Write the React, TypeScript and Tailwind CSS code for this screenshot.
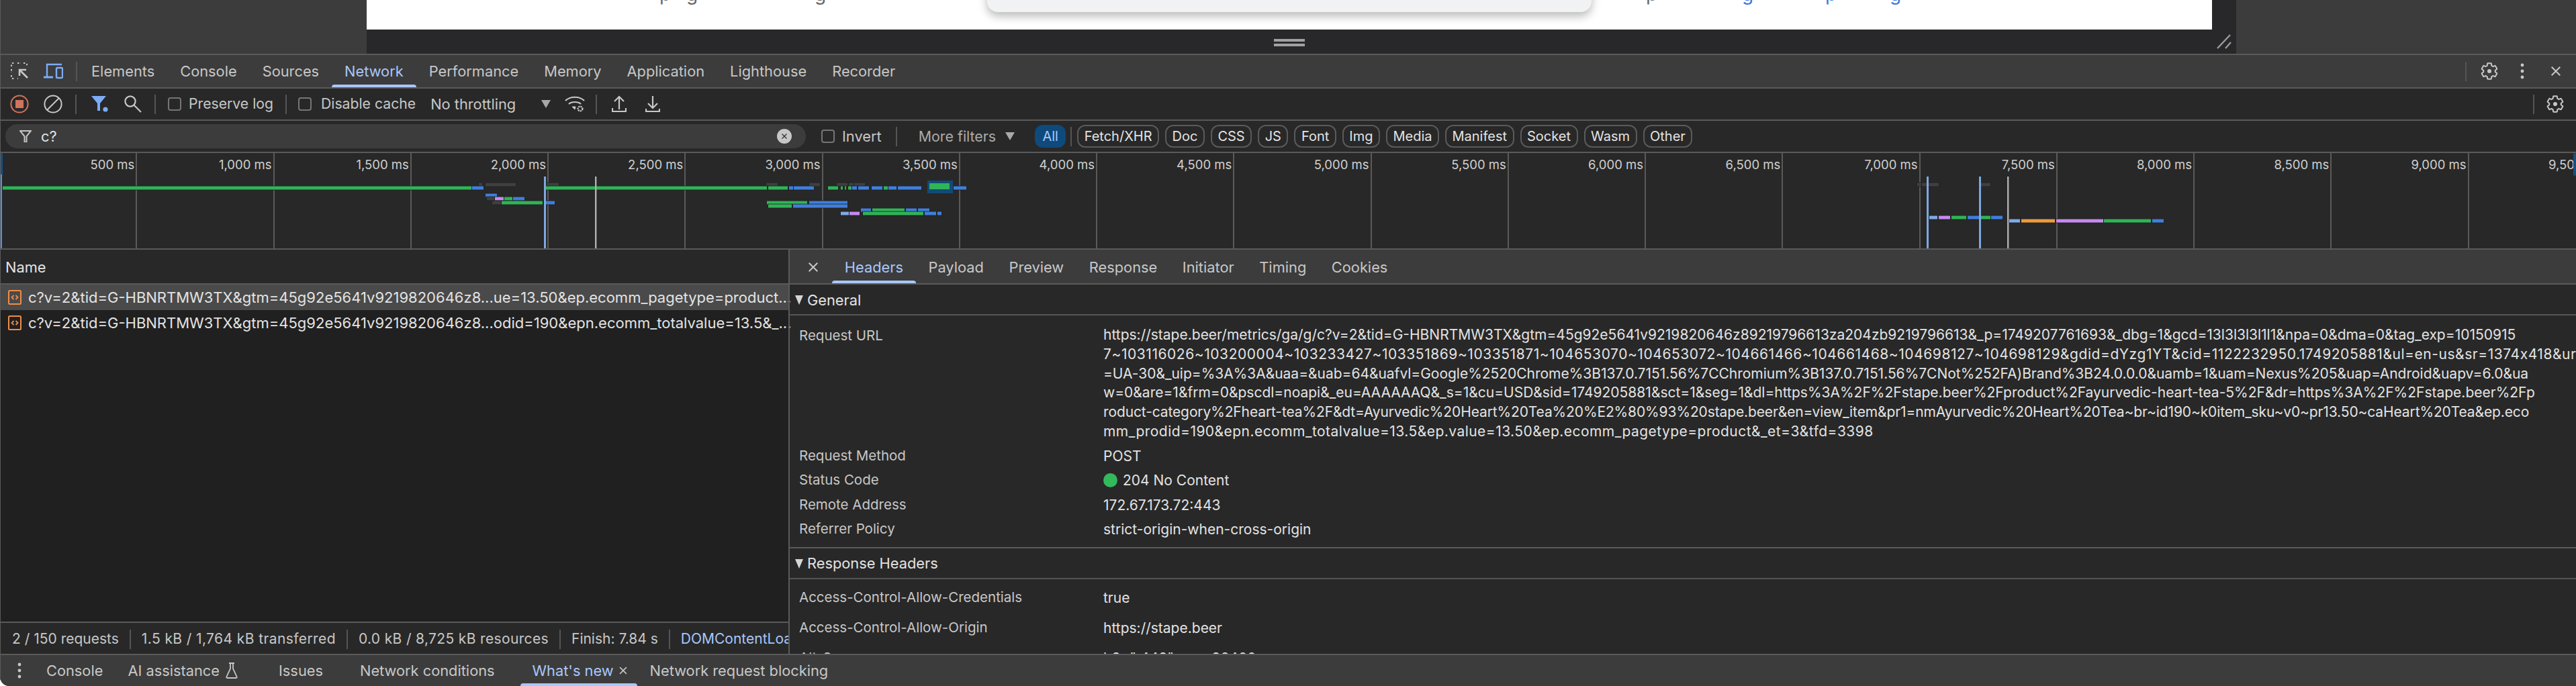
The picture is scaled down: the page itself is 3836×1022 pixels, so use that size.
import React from 'react';

const mainTabs = ['Elements', 'Console', 'Sources', 'Network', 'Performance', 'Memory', 'Application', 'Lighthouse', 'Recorder'];
const detailTabs = ['Headers', 'Payload', 'Preview', 'Response', 'Initiator', 'Timing', 'Cookies'];
const pills = ['Fetch/XHR', 'Doc', 'CSS', 'JS', 'Font', 'Img', 'Media', 'Manifest', 'Socket', 'Wasm', 'Other'];
const ticks = ['500', '1,000', '1,500', '2,000', '2,500', '3,000', '3,500', '4,000', '4,500', '5,000', '5,500', '6,000', '6,500', '7,000', '7,500', '8,000', '8,500', '9,000', '9,500'];

const urlLines = [
  { text: 'https://stape.beer/metrics/ga/g/c?v=2&tid=G-HBNRTMW3TX&gtm=45g92e5641v9219820646z89219796613za204zb9219796613&_p=1749207761693&_dbg=1&gcd=13l3l3l3l1l1&npa=0&dma=0&tag_exp=10150915', cls: '' },
  { text: '7~103116026~103200004~103233427~103351869~103351871~104653070~104653072~104661466~104661468~104698127~104698129&gdid=dYzg1YT&cid=1122232950.1749205881&ul=en-us&sr=1374x418&ur', cls: 'tracking-[0.55px]' },
  { text: '=UA-30&_uip=%3A%3A&uaa=&uab=64&uafvl=Google%2520Chrome%3B137.0.7151.56%7CChromium%3B137.0.7151.56%7CNot%252FA)Brand%3B24.0.0.0&uamb=1&uam=Nexus%205&uap=Android&uapv=6.0&ua', cls: 'tracking-[-0.02px]' },
  { text: 'w=0&are=1&frm=0&pscdl=noapi&_eu=AAAAAAQ&_s=1&cu=USD&sid=1749205881&sct=1&seg=1&dl=https%3A%2F%2Fstape.beer%2Fproduct%2Fayurvedic-heart-tea-5%2F&dr=https%3A%2F%2Fstape.beer%2Fp', cls: '' },
  { text: 'roduct-category%2Fheart-tea%2F&dt=Ayurvedic%20Heart%20Tea%20%E2%80%93%20stape.beer&en=view_item&pr1=nmAyurvedic%20Heart%20Tea~br~id190~k0item_sku~v0~pr13.50~caHeart%20Tea&ep.eco', cls: 'tracking-[-0.12px]' },
  { text: 'mm_prodid=190&epn.ecomm_totalvalue=13.5&ep.value=13.50&ep.ecomm_pagetype=product&_et=3&tfd=3398', cls: 'tracking-[0.46px]' },
];

const G = '#2fb457';
const B = '#3f7fdc';
const P = '#c58af0';
const L = '#7eaae6';
const O = '#ee9b3c';
const D = '#3f3f3f';

// [y, x1, x2, colour] in page pixels
const bars: [number, number, number, string][] = [
  [275, 713, 718, D], [275, 723, 768, D], [275, 814, 832, D], [275, 1141, 1158, D], [275, 1205, 1221, D],
  [275, 1246, 1262, D], [275, 1264, 1271, D], [275, 1272, 1288, D],
  [275, 2855, 2861, D], [275, 2862, 2887, D], [275, 2949, 2964, D],
  [280, 4, 703, G], [280, 703, 720, B], [280, 813, 1142, G], [280, 1144, 1173, G], [280, 1175, 1181, B], [280, 1182, 1212, B],
  [280, 1233, 1248, G], [280, 1252, 1255, G], [280, 1258, 1260, G], [280, 1263, 1268, G], [280, 1269, 1276, B],
  [280, 1278, 1294, B], [280, 1298, 1314, B], [280, 1316, 1322, G], [280, 1323, 1335, B], [280, 1337, 1372, B], [280, 1420, 1439, B],
  [291, 723, 740, B],
  [296, 725, 736, D], [296, 737, 750, P], [296, 751, 763, G], [296, 764, 781, B],
  [302, 733, 746, D], [302, 747, 808, G], [302, 810, 826, B], [302, 1142, 1202, G], [302, 1205, 1262, B],
  [307, 1144, 1179, G], [307, 1181, 1262, B],
  [313, 1282, 1297, B], [313, 1299, 1347, G], [313, 1349, 1365, B], [313, 1367, 1384, B],
  [318, 1252, 1264, L], [318, 1265, 1280, P], [318, 1285, 1375, G], [318, 1377, 1394, B], [318, 1396, 1402, B],
  [324, 2873, 2885, L], [324, 2887, 2904, P], [324, 2906, 2928, G], [324, 2930, 2947, B], [324, 2950, 2964, G], [324, 2965, 2982, B],
  [329, 2992, 3008, L], [329, 3010, 3060, O], [329, 3062, 3132, P], [329, 3133, 3203, G], [329, 3205, 3222, B],
];

const Divider = ({ className = '' }: { className?: string }) => <div className={`w-[2px] h-[29px] bg-[#555555] shrink-0 ${className}`} />;

const Checkbox = ({ className = '' }: { className?: string }) => (
  <div className={`w-[20px] h-[20px] rounded-[4px] border-2 border-[#757575] shrink-0 ${className}`} />
);

const Gear = ({ className = '' }: { className?: string }) => (
  <svg viewBox="0 0 24 24" className={`w-[28px] h-[28px] shrink-0 ${className}`} fill="none" stroke="#c7c7c7" strokeWidth="1.7">
    <path d="M19.43 12.98c.04-.32.07-.64.07-.98s-.03-.66-.07-.98l2.11-1.65c.19-.15.24-.42.12-.64l-2-3.46c-.12-.22-.39-.3-.61-.22l-2.49 1c-.52-.4-1.08-.73-1.69-.98l-.38-2.65C14.46 2.18 14.25 2 14 2h-4c-.25 0-.46.18-.49.42l-.38 2.65c-.61.25-1.17.59-1.69.98l-2.49-1c-.23-.09-.49 0-.61.22l-2 3.46c-.13.22-.07.49.12.64l2.11 1.65c-.04.32-.07.65-.07.98s.03.66.07.98l-2.11 1.65c-.19.15-.24.42-.12.64l2 3.46c.12.22.39.3.61.22l2.49-1c.52.4 1.08.73 1.69.98l.38 2.65c.03.24.24.42.49.42h4c.25 0 .46-.18.49-.42l.38-2.65c.61-.25 1.17-.59 1.69-.98l2.49 1c.23.09.49 0 .61-.22l2-3.46c.12-.22.07-.49-.12-.64l-2.11-1.65z" />
    <circle cx="12" cy="12" r="2.6" fill="#c7c7c7" stroke="none" />
  </svg>
);

const Close = ({ size = 20, className = '', color = '#c7c7c7' }: { size?: number; className?: string; color?: string }) => (
  <svg viewBox="0 0 20 20" width={size} height={size} className={`shrink-0 ${className}`} stroke={color} strokeWidth="2.2" fill="none">
    <path d="M3 3l14 14M17 3L3 17" />
  </svg>
);

const Triangle = ({ className = '' }: { className?: string }) => (
  <svg viewBox="0 0 14 12" className={`w-[14px] h-[12px] shrink-0 ${className}`}>
    <path d="M0 0h14L7 12z" fill="#a8a8a8" />
  </svg>
);

const Disclosure = () => (
  <svg viewBox="0 0 12 14" className="w-[12px] h-[14px] shrink-0">
    <path d="M0 0h12L6 14z" fill="#d5d5d5" />
  </svg>
);

const Dots = ({ className = '' }: { className?: string }) => (
  <svg viewBox="0 0 6 24" className={`w-[6px] h-[24px] shrink-0 ${className}`} fill="#c7c7c7">
    <circle cx="3" cy="3" r="2.4" />
    <circle cx="3" cy="12" r="2.4" />
    <circle cx="3" cy="21" r="2.4" />
  </svg>
);

const FileIcon = () => (
  <svg viewBox="0 0 20 22" className="w-[20px] h-[22px] shrink-0 ml-[12px]" fill="none">
    <rect x="1" y="1" width="18" height="20" rx="1.5" stroke="#ee8d4a" strokeWidth="2" />
    <path d="M8.5 8L5.5 11l3 3M11.5 8l3 3-3 3" stroke="#ee8d4a" strokeWidth="1.8" />
  </svg>
);

const Row = ({ text, selected }: { text: string; selected?: boolean }) => (
  <div className={`h-[38px] flex items-center ${selected ? 'bg-[#4a4a4a]' : ''}`}>
    <FileIcon />
    <span className="ml-[10px] text-[22px] text-[#e3e3e3] whitespace-nowrap">{text}</span>
  </div>
);

const Field = ({ name, className = '', children }: { name: string; className?: string; children: React.ReactNode }) => (
  <div className={`flex items-center pl-[14px] whitespace-nowrap ${className}`}>
    <span className="w-[453px] shrink-0 text-[20.5px] text-[#c7c7c7]">{name}</span>
    <span className="text-[21px] text-[#e3e3e3] flex items-center">{children}</span>
  </div>
);

const SectionTitle = ({ title, className = '' }: { title: string; className?: string }) => (
  <div className={`flex items-center pl-[8px] pt-[2px] border-b-2 border-[#555555] text-[21.8px] text-[#e3e3e3] ${className}`}>
    <Disclosure />
    <span className="ml-[6px]">{title}</span>
  </div>
);

export default function App() {
  return (
    <div className="w-[3836px] h-[1022px] overflow-hidden flex flex-col bg-[#282828] rounded-bl-[14px] font-['Inter',sans-serif] text-[21.8px] text-[#c7c7c7] relative">
      {/* page preview strip */}
      <div className="flex h-[80px] shrink-0">
        <div className="w-[546px] bg-[#3c3c3c]" />
        <div className="w-[2784px] bg-[#28282a] relative">
          <div className="w-[2748px] h-[44px] bg-white relative overflow-hidden">
            <span className="absolute left-[436px] top-[-30px] text-[28px] text-[#666666]">p</span>
            <span className="absolute left-[476px] top-[-30px] text-[28px] text-[#666666]">g</span>
            <span className="absolute left-[667px] top-[-30px] text-[28px] text-[#666666]">g</span>
            <span className="absolute left-[1905px] top-[-30px] text-[28px] text-[#666666]">p</span>
            <span className="absolute left-[2048px] top-[-30px] text-[28px] text-[#3b78e0]">g</span>
            <span className="absolute left-[2172px] top-[-30px] text-[28px] text-[#3b78e0]">p</span>
            <span className="absolute left-[2268px] top-[-30px] text-[28px] text-[#3b78e0]">g</span>
            <div className="absolute left-[924px] top-[-42px] w-[900px] h-[60px] bg-[#f1f2f4] rounded-[16px] shadow-[0_6px_14px_rgba(0,0,0,0.28)]" />
          </div>
          <div className="w-[2748px] h-[36px] flex flex-col items-center pt-[14px] gap-[3px]">
            <div className="w-[46px] h-[4px] bg-[#a0a0a0]" />
            <div className="w-[46px] h-[4px] bg-[#a0a0a0]" />
          </div>
          <svg viewBox="0 0 24 22" className="absolute left-[2754px] top-[51px] w-[24px] h-[22px]" stroke="#9a9a9a" strokeWidth="2.4" fill="none">
            <path d="M2 21L21 1M14 21L22 12" />
          </svg>
        </div>
        <div className="flex-1 bg-[#3c3c3c]" />
      </div>

      {/* main tabs */}
      <div className="h-[50px] shrink-0 flex items-center bg-[#3c3c3c] border-t-2 border-[#5a5a5a]">
        <svg viewBox="0 0 26 26" className="w-[26px] h-[26px] ml-[16px] shrink-0" fill="none" stroke="#c7c7c7" strokeWidth="2">
          <path d="M1 6V3a2 2 0 012-2h3" strokeDasharray="2.4 2.4" />
          <path d="M10 1h5M19 1h3a2 2 0 012 2v3M1 10v5M1 19v3a2 2 0 002 2h3M10 24h1" strokeDasharray="2.4 2.4" />
          <path d="M14 12l11 11" strokeWidth="2.6" />
          <path d="M13 20v-9h10" strokeWidth="2.6" />
        </svg>
        <svg viewBox="0 0 30 24" className="w-[30px] h-[24px] ml-[22px] shrink-0" fill="none" stroke="#7cacf8" strokeWidth="2.4">
          <path d="M28 2H6v19" />
          <path d="M1 21h14" strokeWidth="3" />
          <rect x="20" y="7" width="9" height="15" rx="1.5" />
        </svg>
        <Divider className="ml-[19px]" />
        <div className="flex h-full ml-[2px]">
          {mainTabs.map(t => (
            <div key={t} className={`px-[19px] h-full flex items-center relative ${t === 'Network' ? 'text-[#a8c7fa]' : ''}`}>
              {t}
              {t === 'Network' && <div className="absolute left-0 right-0 bottom-0 h-[4px] rounded-t-[4px] bg-[#a8c7fa]" />}
            </div>
          ))}
        </div>
        <div className="flex-1" />
        <Divider />
        <Gear className="ml-[20px]" />
        <Dots className="ml-[32px]" />
        <Close size={18} className="ml-[38px] mr-[21px]" />
      </div>

      {/* network toolbar */}
      <div className="h-[48px] shrink-0 flex items-center bg-[#282828] border-t-2 border-[#5a5a5a]">
        <svg viewBox="0 0 28 28" className="w-[28px] h-[28px] ml-[15px] shrink-0" fill="none">
          <circle cx="14" cy="14" r="12.6" stroke="#d2745c" strokeWidth="2" />
          <rect x="8" y="8" width="12" height="12" fill="#d2745c" />
        </svg>
        <svg viewBox="0 0 28 28" className="w-[28px] h-[28px] ml-[22px] shrink-0" fill="none" stroke="#c7c7c7" strokeWidth="2">
          <circle cx="14" cy="14" r="12.6" />
          <path d="M5 23L23 5" />
        </svg>
        <Divider className="ml-[19px]" />
        <svg viewBox="0 0 28 26" className="w-[28px] h-[26px] ml-[20px] shrink-0" fill="#7cacf8">
          <path d="M2 1h22l-9 11v11h-4V12z" />
          <circle cx="23" cy="21" r="3.6" />
        </svg>
        <svg viewBox="0 0 26 26" className="w-[26px] h-[26px] ml-[23px] shrink-0" fill="none" stroke="#c7c7c7" strokeWidth="2.2">
          <circle cx="9" cy="9" r="7.6" />
          <path d="M14.5 14.5L25 25" />
        </svg>
        <Divider className="ml-[19px]" />
        <Checkbox className="ml-[18px]" />
        <span className="ml-[11px] whitespace-nowrap text-[21.2px]">Preserve log</span>
        <Divider className="ml-[18px]" />
        <Checkbox className="ml-[17px]" />
        <span className="ml-[14px] whitespace-nowrap text-[21.2px]">Disable cache</span>
        <span className="ml-[22px] whitespace-nowrap">No throttling</span>
        <Triangle className="ml-[38px]" />
        <svg viewBox="0 0 30 26" className="w-[30px] h-[26px] ml-[21px] shrink-0" fill="none" stroke="#c7c7c7" strokeWidth="2.2">
          <path d="M1 8c7-7 21-7 28 0M6 13c4-4 14-4 18 0" />
          <path d="M11 17l4 4 1-4z" fill="#c7c7c7" strokeWidth="1" />
          <circle cx="23" cy="20" r="3.4" strokeWidth="2.4" strokeDasharray="2.2 1" />
        </svg>
        <Divider className="ml-[16px]" />
        <svg viewBox="0 0 22 26" className="w-[22px] h-[26px] ml-[22px] shrink-0" fill="none" stroke="#c7c7c7" strokeWidth="2.2">
          <path d="M11 21V3M4 9l7-7 7 7" />
          <path d="M1 19v5h20v-5" />
        </svg>
        <svg viewBox="0 0 22 26" className="w-[22px] h-[26px] ml-[28px] shrink-0" fill="none" stroke="#c7c7c7" strokeWidth="2.2">
          <path d="M11 1v17M4 12l7 7 7-7" />
          <path d="M1 20v4h20v-4" />
        </svg>
        <div className="flex-1" />
        <Divider />
        <Gear className="ml-[17px] mr-[17px]" />
      </div>

      {/* filter bar */}
      <div className="h-[48px] shrink-0 flex items-center bg-[#282828] border-t-2 border-[#5a5a5a]">
        <div className="w-[1192px] h-[36px] ml-[8px] rounded-[18px] bg-[#3c3c3c] flex items-center shrink-0">
          <svg viewBox="0 0 18 18" className="w-[18px] h-[18px] ml-[21px] shrink-0" fill="none" stroke="#c7c7c7" strokeWidth="2">
            <path d="M1 1h16l-6.5 8v9h-3V9z" />
          </svg>
          <span className="ml-[14px] text-[#e3e3e3]">c?</span>
          <div className="flex-1" />
          <div className="w-[22px] h-[22px] rounded-full bg-[#c7c7c7] flex items-center justify-center mr-[21px]">
            <Close size={10} color="#282828" />
          </div>
        </div>
        <Checkbox className="ml-[23px]" />
        <span className="ml-[11px]">Invert</span>
        <Divider className="ml-[21px]" />
        <span className="ml-[32px] text-[#ababab] whitespace-nowrap text-[21.4px]">More filters</span>
        <Triangle className="ml-[14px]" />
        <div className="ml-[30px] h-[34px] w-[46px] rounded-[12px] bg-[#0e4a7c] text-[#a8c7fa] text-[20px] flex items-center justify-center">All</div>
        <Divider className="ml-[7px]" />
        <div className="flex gap-[9px] ml-[8px]">
          {pills.map(p => (
            <div key={p} className="h-[34px] px-[8.5px] rounded-[12px] border-2 border-[#5a5a5a] text-[20px] text-[#e3e3e3] flex items-center whitespace-nowrap">{p}</div>
          ))}
        </div>
      </div>

      {/* overview */}
      <div className="h-[146px] shrink-0 flex relative overflow-hidden border-t-2 border-b-2 border-[#5a5a5a] bg-[#282828]">
        {ticks.map(t => (
          <div key={t} className="w-[204.25px] shrink-0 border-r-2 border-[#5a5a5a] text-right pr-[2px] pt-[5px] text-[18.5px] leading-[24px] text-[#d0d0d0] whitespace-nowrap">
            {t} ms
          </div>
        ))}
        <svg viewBox="0 228 3836 142" className="absolute left-0 top-0 w-[3836px] h-[142px]">
          <rect x="0" y="228" width="4" height="34" rx="2" fill="#1b4f7f" />
          <rect x="0" y="260" width="3" height="110" fill="#5b8fd8" />
          <rect x="3832" y="228" width="4" height="34" rx="2" fill="#1b4f7f" />
          {bars.map(([y, x1, x2, c], i) => (
            <g key={i}>
              <rect x={x1 - 1} y={y - 3.5} width={x2 - x1 + 2} height={7} fill="#222222" opacity={0.8} />
              <rect x={x1} y={y - 2.5} width={x2 - x1} height={5} fill={c} />
            </g>
          ))}
          <rect x="1381" y="269" width="38" height="19" fill="#124a76" />
          <rect x="1384" y="273" width="30" height="9" fill={G} />
          {[811, 2870, 2948].map(x => <rect key={x} x={x - 1} y="263" width="3" height="107" fill="#7ea8e0" />)}
          {[886, 2989].map(x => <rect key={x} x={x} y="263" width="2.4" height="107" fill="#b0b0b0" />)}
        </svg>
      </div>

      {/* split */}
      <div className="flex-1 min-h-0 flex">
        <div className="w-[1174px] shrink-0 flex flex-col bg-[#202020]">
          <div className="h-[48px] shrink-0 flex items-center pl-[8px] pt-[2px] bg-[#282828] border-b-2 border-[#5a5a5a] text-[#e3e3e3] box-content">Name</div>
          <Row selected text="c?v=2&tid=G-HBNRTMW3TX&gtm=45g92e5641v9219820646z8...ue=13.50&ep.ecomm_pagetype=product..." />
          <Row text="c?v=2&tid=G-HBNRTMW3TX&gtm=45g92e5641v9219820646z8...odid=190&epn.ecomm_totalvalue=13.5&_..." />
          <div className="flex-1" />
          <div className="h-[48px] shrink-0 flex items-center pt-[2px] bg-[#282828] border-t-2 border-[#5a5a5a] overflow-hidden text-[21px] whitespace-nowrap">
            <span className="ml-[18px]">2 / 150 requests</span>
            <Divider className="ml-[16px]" />
            <span className="ml-[16px] tracking-[0.4px]">1.5 kB / 1,764 kB transferred</span>
            <Divider className="ml-[16px]" />
            <span className="ml-[16px] tracking-[0.35px]">0.0 kB / 8,725 kB resources</span>
            <Divider className="ml-[16px]" />
            <span className="ml-[16px]">Finish: 7.84 s</span>
            <Divider className="ml-[16px]" />
            <span className="ml-[16px] text-[#a8c7fa]">DOMContentLoaded: 2.04 s</span>
          </div>
        </div>
        <div className="flex-1 min-w-0 flex flex-col border-l-2 border-[#5a5a5a] overflow-hidden">
          <div className="h-[48px] shrink-0 flex items-center pt-[2px] bg-[#3c3c3c] border-b-2 border-[#5a5a5a] box-content">
            <Close size={18} className="ml-[26px]" />
            <div className="flex h-full ml-[19px]">
              {detailTabs.map(t => (
                <div key={t} className={`px-[18.8px] h-full flex items-center relative ${t === 'Headers' ? 'text-[#a8c7fa]' : ''}`}>
                  {t}
                  {t === 'Headers' && <div className="absolute left-0 right-0 bottom-0 h-[4px] rounded-t-[4px] bg-[#a8c7fa]" />}
                </div>
              ))}
            </div>
          </div>
          <SectionTitle title="General" className="h-[46px] shrink-0" />
          <div className="flex pl-[14px] pt-[15px] shrink-0 whitespace-nowrap">
            <span className="w-[453px] shrink-0 text-[20.5px] leading-[29px] text-[#c7c7c7]">Request URL</span>
            <div className="text-[21px] leading-[28.8px] text-[#e3e3e3]">
              {urlLines.map(l => <div key={l.text} className={l.cls}>{l.text}</div>)}
            </div>
          </div>
          <Field name="Request Method" className="h-[36px] mt-[4px] shrink-0">POST</Field>
          <Field name="Status Code" className="h-[36px] shrink-0">
            <span className="w-[21px] h-[21px] rounded-full bg-[#33b85c] mr-[8px]" />204 No Content
          </Field>
          <Field name="Remote Address" className="h-[37px] shrink-0">172.67.173.72:443</Field>
          <Field name="Referrer Policy" className="h-[36px] shrink-0">strict-origin-when-cross-origin</Field>
          <div className="h-[8px] shrink-0 border-b-2 border-[#5a5a5a] box-content" />
          <SectionTitle title="Response Headers" className="h-[46px] shrink-0" />
          <Field name="Access-Control-Allow-Credentials" className="h-[45px] mt-[5px] shrink-0">true</Field>
          <Field name="Access-Control-Allow-Origin" className="h-[45px] shrink-0">https://stape.beer</Field>
          <Field name="Alt-Svc" className="h-[45px] shrink-0">h3=":443"; ma=86400</Field>
        </div>
      </div>

      {/* drawer tabs */}
      <div className="h-[48px] shrink-0 flex items-center bg-[#3c3c3c] border-t-2 border-[#5a5a5a] whitespace-nowrap">
        <Dots className="ml-[26px]" />
        <span className="ml-[37px]">Console</span>
        <span className="ml-[37px]">AI assistance</span>
        <svg viewBox="0 0 18 24" className="w-[18px] h-[24px] ml-[9px] shrink-0" fill="none" stroke="#c7c7c7" strokeWidth="1.8">
          <path d="M5 1h8M7 1v8L1.5 21a1.2 1.2 0 001 2h13a1.2 1.2 0 001-2L11 9V1" />
        </svg>
        <span className="ml-[61px]">Issues</span>
        <span className="ml-[55px]">Network conditions</span>
        <div className="ml-[38px] h-full flex items-center relative pl-[18px] pr-[14px] text-[#a8c7fa]">
          What's new
          <Close size={14} className="ml-[7px]" />
          <div className="absolute left-0 right-0 bottom-0 h-[4px] rounded-t-[4px] bg-[#a8c7fa]" />
        </div>
        <span className="ml-[19px]">Network request blocking</span>
      </div>

      <div className="absolute left-0 top-0 bottom-0 w-[1px] bg-[#5a5a5a]" />
    </div>
  );
}
